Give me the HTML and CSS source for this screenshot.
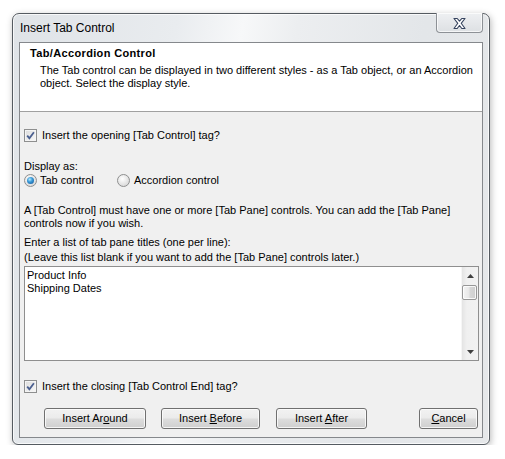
FILE: index.html
```html
<!DOCTYPE html>
<html>
<head>
<meta charset="utf-8">
<link rel="stylesheet" href="styles.css">
</head>
<body>
<div class="window">
  <div class="titlebar">
    <span class="title">Insert Tab Control</span>
    <div class="close">
      <svg width="13" height="11" viewBox="0 0 13 11"><polygon points="1,0.5 4.2,0.5 6.5,3.2 8.8,0.5 12,0.5 8.2,5.3 12,10.5 8.8,10.5 6.5,7.5 4.2,10.5 1,10.5 4.8,5.3" fill="#fff" stroke="#36435e" stroke-width="1.1" stroke-linejoin="round"/></svg>
    </div>
  </div>
  <div class="client">
    <div class="header">
      <div class="h-title">Tab/Accordion Control</div>
      <div class="h-desc">The Tab control can be displayed in two different styles - as a Tab object, or an Accordion<br>object. Select the display style.</div>
    </div>
    <div class="content">
      <div class="check-row first-check">
        <span class="checkbox"><svg width="11" height="11" viewBox="0 0 11 11"><path d="M2.2 5.6 L4.4 8.2 L8.9 2.3" fill="none" stroke="#4a5f8f" stroke-width="1.8"/></svg></span>
        <span>Insert the opening [Tab Control] tag?</span>
      </div>
      <div class="display-label">Display as:</div>
      <div class="radio-row">
        <div class="radio-item tab-radio"><span class="radio checked"><span class="dot"></span></span><span>Tab control</span></div>
        <div class="radio-item"><span class="radio"></span><span>Accordion control</span></div>
      </div>
      <div class="para">A [Tab Control] must have one or more [Tab Pane] controls. You can add the [Tab Pane]<br>controls now if you wish.</div>
      <div class="enter">Enter a list of tab pane titles (one per line):</div>
      <div class="leave">(Leave this list blank if you want to add the [Tab Pane] controls later.)</div>
      <div class="listbox">
        <div class="list-text">Product Info<br>Shipping Dates</div>
        <div class="scrollbar">
          <div class="sb-btn"><svg width="7" height="4" viewBox="0 0 7 4"><polygon points="3.5,0 7,4 0,4" fill="#404040"/></svg></div>
          <div class="sb-track"><div class="sb-thumb"></div></div>
          <div class="sb-btn"><svg width="7" height="4" viewBox="0 0 7 4"><polygon points="0,0 7,0 3.5,4" fill="#404040"/></svg></div>
        </div>
      </div>
      <div class="check-row second-check">
        <span class="checkbox"><svg width="11" height="11" viewBox="0 0 11 11"><path d="M2.2 5.6 L4.4 8.2 L8.9 2.3" fill="none" stroke="#4a5f8f" stroke-width="1.8"/></svg></span>
        <span>Insert the closing [Tab Control End] tag?</span>
      </div>
      <div class="buttons">
        <div class="btn b-around"><span>Insert Ar<u>o</u>und</span></div>
        <div class="btn b-before"><span>Insert <u>B</u>efore</span></div>
        <div class="btn b-after"><span>Insert <u>A</u>fter</span></div>
        <div class="btn b-cancel"><span><u>C</u>ancel</span></div>
      </div>
    </div>
  </div>
</div>
</body>
</html>
```
FILE: styles.css
```css
html, body {
  margin: 0;
  background: #ffffff;
}
body {
  font-family: "Liberation Sans", Arial, sans-serif;
  font-size: 11px;
  color: #000;
}
.window {
  margin: 13px 0 0 12px;
  width: 478px;
  height: 432px;
  box-sizing: border-box;
  border: 1px solid #555b61;
  border-radius: 7px 7px 6px 6px;
  padding: 0 6px 6px 6px;
  background: linear-gradient(100deg, #dfe3e7 0%, #e9ecef 30%, #f7f8f9 42%, #eceef0 52%, #e3e6e9 75%, #e6e8ea 100%);
  box-shadow: inset 0 0 0 1px rgba(255,255,255,0.75), 1px 2px 7px rgba(0,0,0,0.28);
  display: flex;
  flex-direction: column;
}
.titlebar {
  height: 28px;
  display: flex;
  justify-content: space-between;
  align-items: flex-start;
  flex: none;
}
.title {
  font-size: 12px;
  line-height: 14px;
  padding: 7px 0 0 1px;
  color: #000;
}
.close {
  margin-top: -1px;
  width: 47px;
  height: 20px;
  box-sizing: border-box;
  border: 1px solid #8d9196;
  border-top: none;
  border-radius: 0 0 4px 4px;
  background: linear-gradient(#eef0f2, #e6e8eb 50%, #dde0e3);
  box-shadow: inset 0 0 0 1px rgba(255,255,255,0.7);
  display: flex;
  align-items: center;
  justify-content: center;
}
.close svg { display: block; margin-top: 1px; }
.client {
  flex: 1;
  border: 1px solid #85888c;
  background: #f0f0f0;
  display: flex;
  flex-direction: column;
}
.header {
  background: #fff;
  height: 64px;
  padding: 4px 0 0 10px;
  border-bottom: 1px solid #a0a0a0;
  line-height: 13px;
}
.h-title {
  font-weight: bold;
  letter-spacing: 0.35px;
}
.h-desc {
  margin-top: 4px;
  padding-left: 10px;
}
.content {
  padding: 0 3px 0 4px;
  line-height: 13px;
}
.check-row {
  display: flex;
  align-items: center;
  height: 13px;
}
.first-check { margin-top: 17px; }
.second-check { margin-top: 19px; }
.checkbox {
  width: 13px;
  height: 13px;
  box-sizing: border-box;
  border: 1px solid #8e8f8f;
  background: linear-gradient(135deg, #dcdcdc, #f8f8f8);
  box-shadow: inset 0 0 0 1px #f4f4f4;
  margin-right: 5px;
  display: flex;
  align-items: center;
  justify-content: center;
}
.checkbox svg { display: block; }
.display-label { margin-top: 18px; }
.radio-row {
  margin-top: 1px;
  display: flex;
  height: 13px;
}
.radio-item {
  display: flex;
  align-items: center;
}
.tab-radio { width: 93px; }
.radio {
  width: 13px;
  height: 13px;
  box-sizing: border-box;
  border-radius: 50%;
  border: 1px solid #8e8f8f;
  background: radial-gradient(circle at 40% 35%, #ffffff, #e2e2e2 60%, #cfcfcf);
  margin-right: 3px;
  display: flex;
  align-items: center;
  justify-content: center;
}
.radio .dot {
  width: 7px;
  height: 7px;
  border-radius: 50%;
  background: radial-gradient(circle at 40% 35%, #b8ecff 0%, #3a9ad8 40%, #0f4f92 100%);
}
.radio-item + .radio-item .radio { margin-right: 4px; }
.para { margin-top: 17px; }
.enter { margin-top: 6px; }
.leave { margin-top: 2px; }
.listbox {
  margin-top: 2px;
  height: 95px;
  box-sizing: border-box;
  border: 1px solid #8f8f8f;
  background: #fff;
  display: flex;
}
.list-text {
  flex: 1;
  padding: 2px 0 0 2px;
}
.scrollbar {
  width: 17px;
  display: flex;
  flex-direction: column;
  background: linear-gradient(90deg, #e4e4e4, #f0f0f0 30%, #f2f2f2);
  border-left: 1px solid #f6f6f6;
  box-sizing: border-box;
}
.sb-btn {
  height: 17px;
  display: flex;
  align-items: center;
  justify-content: center;
}
.sb-btn svg { display: block; }
.sb-track {
  flex: 1;
  padding: 1px 0 0 0;
}
.sb-thumb {
  width: 15px;
  height: 15px;
  box-sizing: border-box;
  border: 1px solid #979797;
  border-radius: 2px;
  background: linear-gradient(90deg, #f4f4f4, #e8e8e8 45%, #d6d6d6 55%, #cfcfcf);
  box-shadow: inset 0 0 0 1px rgba(255,255,255,0.8);
}
.buttons {
  margin-top: 15px;
  display: flex;
  padding-left: 20px;
}
.btn {
  height: 21px;
  box-sizing: border-box;
  border: 1px solid #707070;
  border-radius: 3px;
  background: linear-gradient(#f2f2f2 0%, #ebebeb 48%, #dddddd 52%, #cfcfcf 100%);
  box-shadow: inset 0 0 0 1px rgba(252,252,252,0.85);
  display: flex;
  align-items: center;
  justify-content: center;
  line-height: 13px;
}
.btn u { text-underline-offset: 1px; }
.b-around { width: 102px; }
.b-before { width: 99px; margin-left: 15px; }
.b-after { width: 91px; margin-left: 16px; }
.b-cancel { width: 59px; margin-left: auto; margin-right: 1px; }
```
